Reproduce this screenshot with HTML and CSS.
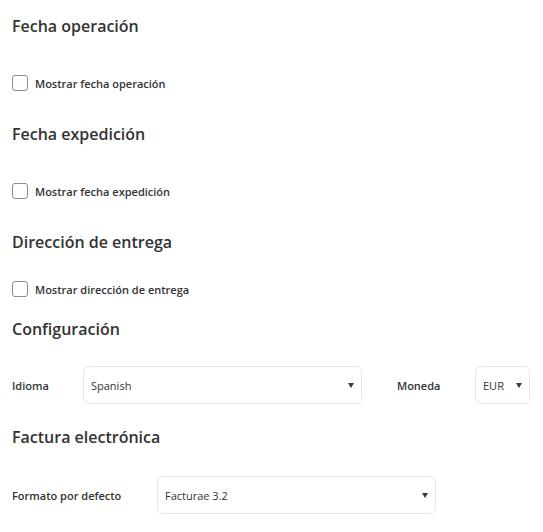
FILE: index.html
```html
<!DOCTYPE html>
<html lang="es">
<head>
    <meta charset="UTF-8">
    <meta name="viewport" content="width=device-width, initial-scale=1.0">
    <title>Ajustes de factura</title>
    <link rel="stylesheet" href="styles.css">
</head>
<body>
    <div class="settings">
        <div class="section">
            <h2>Fecha operación</h2>
            <label class="check">
                <input type="checkbox">
                <span class="box"></span>
                Mostrar fecha operación
            </label>
        </div>

        <div class="section">
            <h2>Fecha expedición</h2>
            <label class="check">
                <input type="checkbox">
                <span class="box"></span>
                Mostrar fecha expedición
            </label>
        </div>

        <div class="section section-short">
            <h2>Dirección de entrega</h2>
            <label class="check">
                <input type="checkbox">
                <span class="box"></span>
                Mostrar dirección de entrega
            </label>
        </div>

        <div class="section section-config">
            <h2>Configuración</h2>
            <div class="field-row">
                <span class="field-label label-idioma">Idioma</span>
                <div class="select select-wide">
                    <span>Spanish</span>
                    <span class="arrow"></span>
                </div>
                <span class="field-label label-moneda">Moneda</span>
                <div class="select select-small">
                    <span>EUR</span>
                    <span class="arrow"></span>
                </div>
            </div>
        </div>

        <div class="section section-factura">
            <h2>Factura electrónica</h2>
            <div class="field-row">
                <span class="field-label label-formato">Formato por defecto</span>
                <div class="select select-wide">
                    <span>Facturae 3.2</span>
                    <span class="arrow"></span>
                </div>
            </div>
        </div>
    </div>
</body>
</html>
```

FILE: styles.css
```css
body {
    margin: 0;
    background-color: #ffffff;
    color: #333333;
    font-family: "Open Sans", Arial, sans-serif;
}
.settings {
    padding: 15px 12px 0 12px;
}
.section {
    margin-bottom: 32px;
}
.section h2 {
    margin: 0 0 38px 0;
    font-size: 16px;
    font-weight: 600;
    line-height: 22px;
    color: #333333;
}
.section-short {
    margin-bottom: 21px;
}
.section-short h2 {
    margin-bottom: 28px;
}
.section-config {
    margin-bottom: 22px;
}
.section-config h2 {
    margin-bottom: 26px;
}
.section-factura h2 {
    margin-bottom: 28px;
}
.check {
    display: flex;
    align-items: center;
    height: 16px;
    font-size: 11px;
    font-weight: 600;
    color: #333333;
    cursor: pointer;
}
.check input {
    display: none;
}
.check .box {
    width: 14px;
    height: 14px;
    border: 1px solid #8c8c8c;
    border-radius: 3px;
    margin-right: 7px;
    background-color: #ffffff;
}
.field-row {
    display: flex;
    align-items: center;
}
.field-label {
    font-size: 11px;
    font-weight: 600;
    color: #333333;
}
.label-idioma {
    width: 71px;
}
.label-moneda {
    width: 78px;
    margin-left: 35px;
}
.label-formato {
    width: 145px;
}
.select {
    position: relative;
    box-sizing: border-box;
    height: 38px;
    display: flex;
    align-items: center;
    padding: 0 7px;
    border: 1px solid #e8e8e8;
    border-radius: 6px;
    font-size: 11px;
    color: #333333;
    background-color: #ffffff;
}
.select-wide {
    width: 279px;
}
.select-small {
    width: 55px;
}
.select .arrow {
    position: absolute;
    right: 7px;
    top: 16px;
    width: 0;
    height: 0;
    border-left: 3.5px solid transparent;
    border-right: 3.5px solid transparent;
    border-top: 5px solid #3a3a3a;
}
```
